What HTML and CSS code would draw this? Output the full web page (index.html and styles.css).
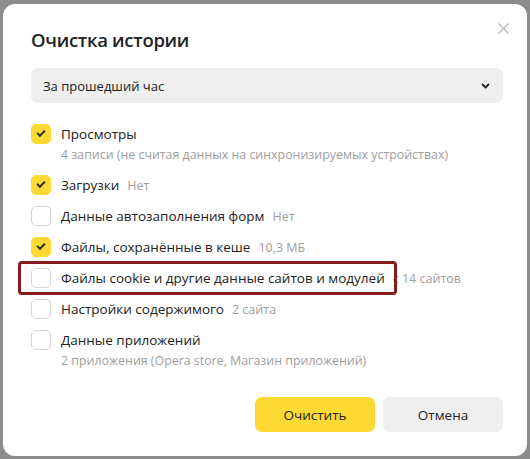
FILE: index.html
```html
<!DOCTYPE html>
<html lang="ru">
<head>
<meta charset="utf-8">
<link rel="stylesheet" href="styles.css">
</head>
<body>
<div class="dialog">
  <button class="close" aria-label="Закрыть">
    <svg width="11" height="11" viewBox="0 0 11 11"><path d="M0.5 0.5L10.5 10.5M10.5 0.5L0.5 10.5" stroke="#b8b8b8" stroke-width="1.2" fill="none"/></svg>
  </button>
  <h1 class="title">Очистка истории</h1>
  <div class="select">
    <span>За прошедший час</span>
    <svg width="9" height="6" viewBox="0 0 9 6"><path d="M1 1L4.5 4.5L8 1" stroke="#222" stroke-width="1.8" fill="none"/></svg>
  </div>
  <ul class="list">
    <li class="item">
      <div class="row"><span class="cb on"></span><span class="label">Просмотры</span></div>
      <div class="sub">4 записи (не считая данных на синхронизируемых устройствах)</div>
    </li>
    <li class="item">
      <div class="row"><span class="cb on"></span><span class="label">Загрузки</span><span class="note">Нет</span></div>
    </li>
    <li class="item">
      <div class="row"><span class="cb"></span><span class="label">Данные автозаполнения форм</span><span class="note">Нет</span></div>
    </li>
    <li class="item">
      <div class="row"><span class="cb on"></span><span class="label">Файлы, сохранённые в кеше</span><span class="note">10,3 МБ</span></div>
    </li>
    <li class="item">
      <div class="row"><span class="cb"></span><span class="label">Файлы cookie и другие данные сайтов и модулей</span><span class="note">с 14 сайтов</span></div>
    </li>
    <li class="item">
      <div class="row"><span class="cb"></span><span class="label">Настройки содержимого</span><span class="note">2 сайта</span></div>
    </li>
    <li class="item">
      <div class="row"><span class="cb"></span><span class="label">Данные приложений</span></div>
      <div class="sub">2 приложения (Opera store, Магазин приложений)</div>
    </li>
  </ul>
  <div class="actions">
    <button class="btn primary">Очистить</button>
    <button class="btn">Отмена</button>
  </div>
  <div class="highlight"></div>
</div>
</body>
</html>
```

FILE: styles.css
```css
html, body {
  margin: 0;
  padding: 0;
}
body {
  background: #8d8d8d;
  width: 530px;
  height: 459px;
  overflow: hidden;
  font-family: "Open Sans", "Noto Sans", sans-serif;
  color: #222;
}
.dialog {
  position: relative;
  box-sizing: border-box;
  margin: 4px 3px 0 3px;
  height: 452px;
  background: #fff;
  border-radius: 12px;
  padding: 24px 24px 0 28px;
}
.close {
  position: absolute;
  top: 19px;
  right: 18px;
  border: 0;
  background: none;
  padding: 0;
  width: 11px;
  height: 11px;
  display: flex;
}
.title {
  margin: 0;
  font-size: 18.5px;
  line-height: 24px;
  font-weight: 600;
  letter-spacing: -0.3px;
}
.select {
  margin-top: 16px;
  height: 35px;
  background: #efefef;
  border-radius: 7px;
  display: flex;
  align-items: center;
  justify-content: space-between;
  padding: 0 13px 0 12px;
  font-size: 13px;
}
.list {
  list-style: none;
  margin: 21px 0 0 0;
  padding: 0;
  display: flex;
  flex-direction: column;
  gap: 11px;
}
.row {
  display: flex;
  align-items: center;
  height: 20px;
  font-size: 13.5px;
}
.cb {
  box-sizing: border-box;
  width: 20px;
  height: 20px;
  border: 1px solid #d3d3d3;
  border-radius: 5px;
  background: #fff;
  margin-right: 10px;
  flex: none;
  position: relative;
}
.cb.on {
  background: #fcd933;
  border-color: #fcd933;
}
.cb.on::after {
  content: "";
  position: absolute;
  left: 5px;
  top: 4.5px;
  width: 6px;
  height: 3px;
  border-left: 2.2px solid #2b2b2b;
  border-bottom: 2.2px solid #2b2b2b;
  transform: rotate(-45deg);
}
.label {
  white-space: nowrap;
}
.note {
  margin-left: 8px;
  color: #9e9e9e;
  font-size: 12.5px;
  white-space: nowrap;
}
.sub {
  margin-top: 1px;
  padding-left: 30px;
  font-size: 12.4px;
  line-height: 19px;
  color: #9e9e9e;
  white-space: nowrap;
}
.actions {
  display: flex;
  justify-content: flex-end;
  gap: 8px;
  margin-top: 27px;
}
.btn {
  width: 120px;
  height: 35px;
  border: 0;
  border-radius: 7px;
  background: #efefef;
  font-family: inherit;
  font-size: 13.5px;
  color: #222;
}
.btn.primary {
  background: #fcd933;
}
.highlight {
  position: absolute;
  left: 15px;
  top: 257px;
  width: 379px;
  height: 34px;
  box-sizing: border-box;
  border: 3px solid #861c1c;
  border-radius: 4px;
}
```
